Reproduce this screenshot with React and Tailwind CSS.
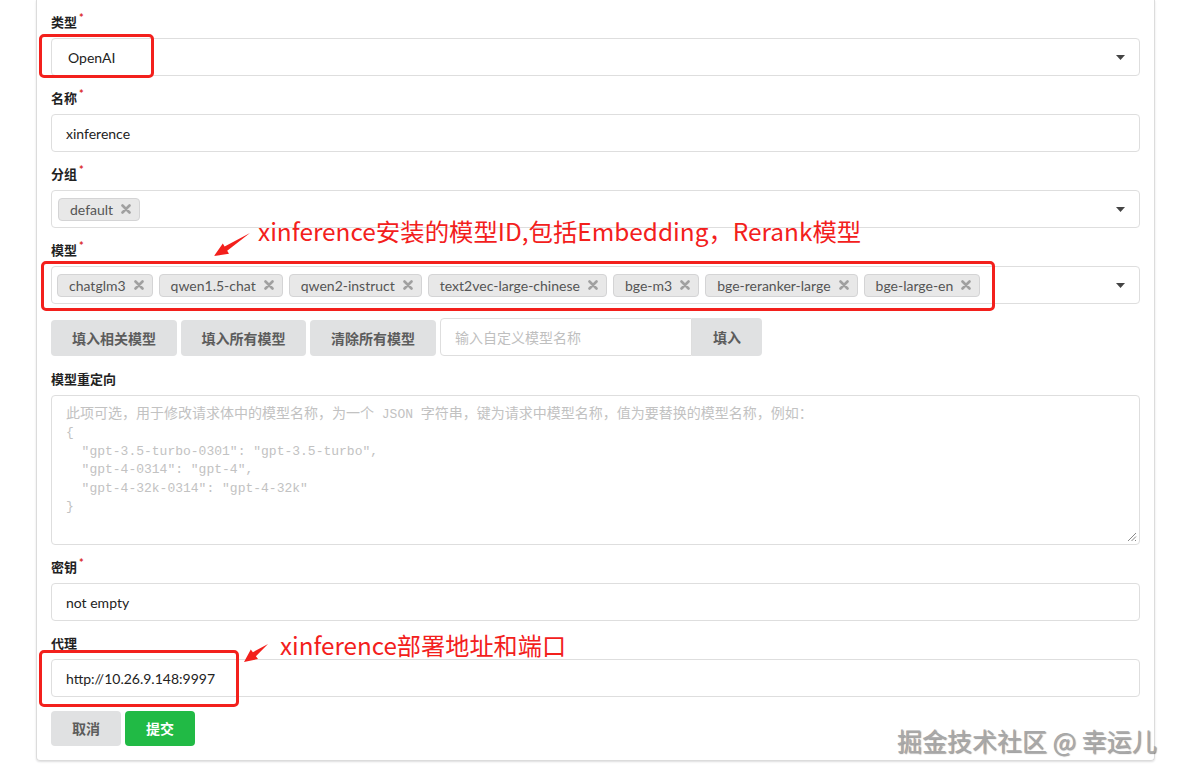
import React from "react";

const models = [
  "chatglm3",
  "qwen1.5-chat",
  "qwen2-instruct",
  "text2vec-large-chinese",
  "bge-m3",
  "bge-reranker-large",
  "bge-large-en",
];

const Label = ({ children, required }) => (
  <div className="flex h-[18px] mb-[7px] text-[13px] leading-[18px] font-bold text-[#222]">
    {children}
    {required && <span className="ml-[2px] -mt-[2px] text-[11px] leading-[14px] text-[#db2828]">*</span>}
  </div>
);

const Caret = () => (
  <svg width="9" height="5" viewBox="0 0 9 5" className="shrink-0">
    <path d="M0 0 L9 0 L4.5 5 Z" fill="#444" />
  </svg>
);

const Tag = ({ text }) => (
  <span className="flex items-center h-[23px] pl-[11px] pr-[8px] gap-[8px] bg-[#e8e8e8] border border-[#d4d4d5] rounded-[4px] text-[14px] text-[#555]">
    {text}
    <svg width="10" height="10" viewBox="0 0 10 10">
      <path d="M1.5 1.5 L8.5 8.5 M8.5 1.5 L1.5 8.5" stroke="#a0a0a0" strokeWidth="2.6" strokeLinecap="round" />
    </svg>
  </span>
);

const Input = ({ value }) => (
  <div className="flex items-center h-[38px] px-[14px] border border-[#dedede] rounded-[4px] text-[14px] text-[#222]">
    {value}
  </div>
);

const Field = ({ label, required, children }) => (
  <div className="mb-[13px]">
    <Label required={required}>{label}</Label>
    {children}
  </div>
);

const GrayButton = ({ children, className = "" }) => (
  <button className={"h-[36px] bg-[#e0e1e2] text-[14px] font-bold text-[#5c5c5c] rounded-[4px] whitespace-nowrap " + className}>
    {children}
  </button>
);

export default function App() {
  return (
    <div className="relative w-[1180px] h-[777px] overflow-hidden bg-white font-[Lato,'Noto_Sans_CJK_SC',sans-serif]">
      <div className="ml-[36px] w-[1119px] px-[14px] pt-[13px] pb-[14px] border-x border-b border-[#dcdcdc] rounded-b-[4px] shadow-[0_1px_2px_rgba(34,36,38,0.15)]">
        <Field label="类型" required>
          <div className="flex items-center justify-between h-[38px] pl-[16px] pr-[14px] border border-[#dedede] rounded-[4px] text-[14px] text-[#222]">
            OpenAI
            <Caret />
          </div>
        </Field>

        <Field label="名称" required>
          <Input value="xinference" />
        </Field>

        <Field label="分组" required>
          <div className="flex items-center justify-between h-[38px] pl-[6px] pr-[14px] border border-[#dedede] rounded-[4px]">
            <Tag text="default" />
            <Caret />
          </div>
        </Field>

        <div>
          <Label required>模型</Label>
          <div className="flex items-center justify-between h-[38px] pl-[5px] pr-[14px] border border-[#dedede] rounded-[4px]">
            <div className="flex gap-[6px]">
              {models.map((m) => (
                <Tag key={m} text={m} />
              ))}
            </div>
            <Caret />
          </div>
        </div>

        <div className="flex items-end gap-[4px] mt-[14px] mb-[14px]">
          <GrayButton className="w-[126px]">填入相关模型</GrayButton>
          <GrayButton className="w-[125px]">填入所有模型</GrayButton>
          <GrayButton className="w-[126px]">清除所有模型</GrayButton>
          <div className="flex h-[38px]">
            <div className="flex items-center w-[252px] px-[14px] border border-[#dedede] rounded-l-[4px] text-[14px] text-[#bfbfbf]">
              输入自定义模型名称
            </div>
            <button className="w-[70px] h-[38px] bg-[#e0e1e2] text-[14px] font-bold text-[#5c5c5c] rounded-r-[4px]">填入</button>
          </div>
        </div>

        <Field label="模型重定向">
          <div className="relative h-[150px] px-[14px] pt-[8px] border border-[#dedede] rounded-[4px] text-[#c2c2c2] leading-[18.4px] whitespace-pre">
            <div className="text-[14px]">
              此项可选，用于修改请求体中的模型名称，为一个<span className="font-['Liberation_Mono',monospace] text-[13px]"> JSON </span>字符串，键为请求中模型名称，值为要替换的模型名称，例如：
            </div>
            <div className="font-['Liberation_Mono',monospace] text-[13px]">
              <div>{"{"}</div>
              <div>{'  "gpt-3.5-turbo-0301": "gpt-3.5-turbo",'}</div>
              <div>{'  "gpt-4-0314": "gpt-4",'}</div>
              <div>{'  "gpt-4-32k-0314": "gpt-4-32k"'}</div>
              <div>{"}"}</div>
            </div>
            <svg width="10" height="10" viewBox="0 0 10 10" className="absolute right-[2px] bottom-[2px]">
              <path d="M9 1 L1 9 M9 4.5 L4.5 9 M9 8 L8 9" stroke="#888" strokeWidth="1" />
            </svg>
          </div>
        </Field>

        <Field label="密钥" required>
          <Input value="not empty" />
        </Field>

        <div>
          <Label>代理</Label>
          <Input value="http://10.26.9.148:9997" />
        </div>

        <div className="flex gap-[4px] mt-[14px]">
          <button className="w-[70px] h-[35px] bg-[#e0e1e2] text-[14px] font-bold text-[#5c5c5c] rounded-[4px]">取消</button>
          <button className="w-[70px] h-[35px] bg-[#21ba45] text-[14px] font-bold text-white rounded-[4px]">提交</button>
        </div>
      </div>

      {/* annotations */}
      <div className="absolute left-[39px] top-[34px] w-[115px] h-[44px] border-[3px] border-[#f3201c] rounded-[5px]" />
      <div className="absolute left-[41px] top-[261px] w-[954px] h-[50px] border-[3px] border-[#f3201c] rounded-[5px]" />
      <div className="absolute left-[39px] top-[650px] w-[200px] h-[57px] border-[3px] border-[#f3201c] rounded-[5px]" />

      <svg width="1180" height="777" className="absolute left-0 top-0 pointer-events-none">
        <polygon points="250,233 224.6,246.6 222.8,243.6 214,256 229,253.8 227.2,250.8" fill="#f3201c" />
        <polygon points="268,644 252.9,652.2 250.8,649.4 244,662 258,659 255.9,656.2" fill="#f3201c" />
      </svg>

      <div className="absolute left-[258px] top-[215px] text-[24.4px] leading-[32px] text-[#f3201c] font-['Noto_Sans_CJK_SC',sans-serif] whitespace-nowrap">
        xinference安装的模型ID,包括Embedding，Rerank模型
      </div>
      <div className="absolute left-[280px] top-[629px] text-[24.2px] leading-[32px] text-[#f3201c] font-['Noto_Sans_CJK_SC',sans-serif] whitespace-nowrap">
        xinference部署地址和端口
      </div>

      <div className="absolute left-[897px] top-[724px] text-[25px] leading-[32px] text-[#a8a8a8] font-['Noto_Sans_CJK_SC',sans-serif] whitespace-nowrap [text-shadow:1px_1px_1px_rgba(0,0,0,0.4)]">
        掘金技术社区 @ 幸运儿
      </div>
    </div>
  );
}
